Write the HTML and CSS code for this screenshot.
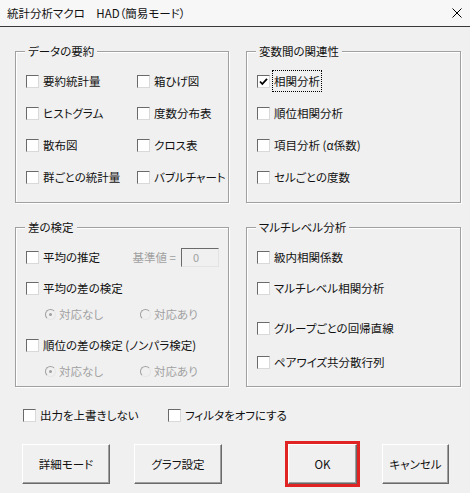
FILE: index.html
```html
<!DOCTYPE html>
<html lang="ja">
  <head>
    <meta charset="UTF-8" />
    <title>統計分析マクロ HAD</title>
    <link rel="stylesheet" href="styles.css">
  </head>
  <body>
    <div class="dialog">
      <div class="titlebar">
        <span class="caption">統計分析マクロ　HAD（簡易モード）</span>
        <svg class="close" width="10" height="10" viewBox="0 0 10 10">
          <path d="M0.5 0.5 L9.5 9.5 M9.5 0.5 L0.5 9.5" stroke="#000" stroke-width="1" fill="none" />
        </svg>
      </div>

      <div class="client">
        <div class="groups">
          <!-- データの要約 -->
          <div class="group top">
            <span class="group-title">データの要約</span>
            <div class="grid2">
              <label class="item"><span class="cb"></span>要約統計量</label>
              <label class="item"><span class="cb"></span>箱ひげ図</label>
              <label class="item"><span class="cb"></span>ヒストグラム</label>
              <label class="item"><span class="cb"></span>度数分布表</label>
              <label class="item"><span class="cb"></span>散布図</label>
              <label class="item"><span class="cb"></span>クロス表</label>
              <label class="item"><span class="cb"></span>群ごとの統計量</label>
              <label class="item"><span class="cb"></span>バブルチャート</label>
            </div>
          </div>

          <!-- 変数間の関連性 -->
          <div class="group top">
            <span class="group-title">変数間の関連性</span>
            <div class="list">
              <label class="item">
                <span class="cb">
                  <svg width="11" height="11" viewBox="0 0 11 11">
                    <path d="M2 5.5 L4.3 8 L9 2.8" stroke="#000" stroke-width="1.8" fill="none" />
                  </svg>
                </span>
                <span class="focus">相関分析</span>
              </label>
              <label class="item"><span class="cb"></span>順位相関分析</label>
              <label class="item"><span class="cb"></span>項目分析 (α係数)</label>
              <label class="item"><span class="cb"></span>セルごとの度数</label>
            </div>
          </div>

          <!-- 差の検定 -->
          <div class="group bottom">
            <span class="group-title">差の検定</span>
            <div class="list tight">
              <div class="item-row">
                <label class="item"><span class="cb"></span>平均の推定</label>
                <span class="base">基準値 =<span class="field">0</span></span>
              </div>
              <label class="item gap-m"><span class="cb"></span>平均の差の検定</label>
              <div class="radios gap-s">
                <span class="radio"><span class="rb on"></span>対応なし</span>
                <span class="radio"><span class="rb"></span>対応あり</span>
              </div>
              <label class="item gap-m"><span class="cb"></span>順位の差の検定 (ノンパラ検定)</label>
              <div class="radios gap-s">
                <span class="radio"><span class="rb on"></span>対応なし</span>
                <span class="radio"><span class="rb"></span>対応あり</span>
              </div>
            </div>
          </div>

          <!-- マルチレベル分析 -->
          <div class="group bottom">
            <span class="group-title">マルチレベル分析</span>
            <div class="list tight">
              <label class="item"><span class="cb"></span>級内相関係数</label>
              <label class="item gap-m"><span class="cb"></span>マルチレベル相関分析</label>
              <label class="item gap-l"><span class="cb"></span>グループごとの回帰直線</label>
              <label class="item gap-n"><span class="cb"></span>ペアワイズ共分散行列</label>
            </div>
          </div>
        </div>

        <div class="options">
          <label class="item"><span class="cb"></span>出力を上書きしない</label>
          <label class="item"><span class="cb"></span>フィルタをオフにする</label>
        </div>

        <div class="buttons">
          <button class="btn wide">詳細モード</button>
          <button class="btn wide">グラフ設定</button>
          <button class="btn ok">OK</button>
          <button class="btn cancel">キャンセル</button>
        </div>
      </div>
    </div>
  </body>
</html>
```

FILE: styles.css
```css
body {
  margin: 0;
  padding: 0;
  background: #f0f0f0;
  font-family: "Noto Sans CJK JP", "Liberation Sans", sans-serif;
  font-size: 11.5px;
  font-feature-settings: "palt";
  color: #111;
}
.dialog {
  width: 470px;
  height: 493px;
  overflow: hidden;
}
.titlebar {
  height: 26px;
  background: #f7f7f7;
  border-bottom: 1px solid #3a3a3a;
  display: flex;
  align-items: center;
  justify-content: space-between;
  padding: 0 8px 0 7px;
}
.caption {
  line-height: 14px;
}
.client {
  padding: 24px 0 0 15px;
}
.groups {
  display: grid;
  grid-template-columns: 214px 215px;
  column-gap: 17px;
  row-gap: 24px;
}
.group {
  position: relative;
  box-sizing: border-box;
  border: 1px solid #a0a0a0;
  box-shadow: 1px 1px 0 #fff, inset 1px 1px 0 #fff;
  padding: 19px 9px 0 10px;
}
.group.top {
  height: 152px;
}
.group.bottom {
  height: 160px;
}
.group-title {
  position: absolute;
  top: -8px;
  left: 9px;
  padding: 0 3px;
  line-height: 14px;
  background: #f0f0f0;
}
.grid2 {
  display: grid;
  grid-template-columns: 111px auto;
  row-gap: 12px;
}
.list {
  display: flex;
  flex-direction: column;
  align-items: flex-start;
  gap: 12px;
}
.list.tight {
  gap: 0;
}
.gap-s {
  margin-top: 6px;
}
.gap-m {
  margin-top: 11px;
}
.gap-l {
  margin-top: 20px;
}
.gap-n {
  margin-top: 14px;
}
.item {
  display: flex;
  align-items: center;
  height: 20px;
  white-space: nowrap;
}
.cb {
  width: 13px;
  height: 13px;
  box-sizing: border-box;
  border: 1px solid;
  border-color: #6a6a6a #d9d9d9 #d9d9d9 #6a6a6a;
  background: #fff;
  margin-right: 4px;
  display: flex;
  align-items: center;
  justify-content: center;
}
.focus {
  outline: 1px dotted #000;
  padding: 2px 1px;
  margin-left: -1px;
}
.item-row {
  display: flex;
  align-items: center;
  justify-content: space-between;
  align-self: stretch;
}
.base {
  display: flex;
  align-items: center;
  color: #a0a0a0;
}
.field {
  width: 38px;
  height: 19px;
  box-sizing: border-box;
  margin-left: 5px;
  border: 1px solid;
  border-color: #6a6a6a #e3e3e3 #e3e3e3 #6a6a6a;
  padding-left: 11px;
  line-height: 16px;
  font-size: 11px;
}
.radios {
  display: grid;
  grid-template-columns: 95px auto;
  padding-left: 19px;
  height: 20px;
  align-items: center;
  color: #a0a0a0;
}
.radio {
  display: flex;
  align-items: center;
}
.rb {
  width: 11px;
  height: 11px;
  box-sizing: border-box;
  border-radius: 50%;
  border: 1px solid #b4b4b4;
  border-color: #a0a0a0 #e6e6e6 #e6e6e6 #a0a0a0;
  background: #f0f0f0;
  margin-right: 3px;
  display: flex;
  align-items: center;
  justify-content: center;
}
.rb.on::after {
  content: "";
  width: 3px;
  height: 3px;
  border-radius: 50%;
  background: #a0a0a0;
}
.options {
  display: grid;
  grid-template-columns: 145px auto;
  margin: 18px 0 0 8px;
}
.buttons {
  display: flex;
  align-items: center;
  margin: 19px 0 0 7px;
}
.btn {
  height: 40px;
  box-sizing: border-box;
  font: inherit;
  color: #111;
  background: #f0f0f0;
  border: 1px solid;
  border-color: #fff #696969 #696969 #fff;
  box-shadow: inset -1px -1px 0 #a0a0a0;
  padding: 0;
}
.btn.wide {
  width: 88px;
  margin-right: 24px;
}
.btn.ok {
  width: 69px;
  margin-left: 42px;
  margin-right: 25px;
  outline: 3px solid #e02424;
}
.btn.cancel {
  width: 67px;
}
```
